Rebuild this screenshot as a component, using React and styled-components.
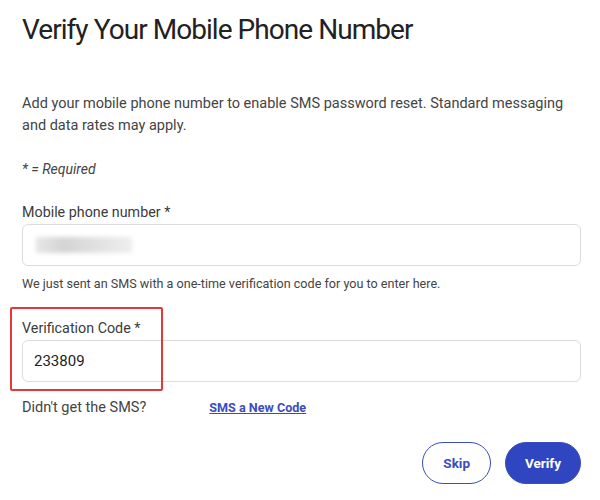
import React from "react";
import styled, { createGlobalStyle } from "styled-components";

const GlobalStyle = createGlobalStyle`
  body {
    margin: 0;
    background: #fff;
    font-family: Roboto, "Liberation Sans", Arial, sans-serif;
    color: #333;
  }
`;

/** Page wrapper */
const Page = styled.div`
  width: 559px;
  padding: 12px 0 0 22px;
`;

const Title = styled.h1`
  margin: 0;
  font-size: 28px;
  font-weight: 400;
  letter-spacing: -0.95px;
  color: #222;
  line-height: 36px;
`;

const Intro = styled.p`
  margin: 45px 0 0 0;
  font-size: 14.5px;
  line-height: 22px;
  color: #444;
`;

const Required = styled.p`
  margin: 21px 0 0 0;
  font-size: 14px;
  font-style: italic;
  color: #444;
  line-height: 22px;
`;

const Field = styled.div`
  position: relative;
  margin-top: ${(p) => p.$top || 0}px;
`;

const Label = styled.label`
  display: block;
  font-size: 14.3px;
  line-height: 20px;
  color: #3c3c3c;
  margin-bottom: 2px;
`;

const InputBox = styled.div`
  height: 40px;
  border: 1px solid #dcdcdc;
  border-radius: 6px;
  display: flex;
  align-items: center;
  padding: 0 11px;
  font-size: 15px;
  color: #222;
`;

const Blurred = styled.span`
  display: inline-block;
  width: 96px;
  height: 16px;
  margin-left: 2px;
  background: linear-gradient(90deg, #e6e6e6 0%, #d4d4d4 30%, #e0e0e0 60%, #eee 100%);
  filter: blur(2px);
`;

const Helper = styled.p`
  margin: 9px 0 0 0;
  font-size: 12.6px;
  line-height: 18px;
  color: #444;
`;

const Highlight = styled.div`
  position: absolute;
  left: -12px;
  top: -11px;
  width: 149px;
  height: 80px;
  border: 2px solid #e53935;
  border-radius: 2px;
  pointer-events: none;
`;

const ResendRow = styled.div`
  display: flex;
  align-items: center;
  margin-top: 17px;
  font-size: 14.5px;
  color: #444;
`;

const ResendLink = styled.a`
  margin-left: 63px;
  font-size: 12.6px;
  font-weight: 700;
  color: #3b4cc0;
  text-decoration: underline;
`;

const Actions = styled.div`
  display: flex;
  justify-content: flex-end;
  gap: 14px;
  margin-top: 26px;
`;

const Button = styled.button`
  height: 42px;
  padding: 0 ${(p) => (p.$primary ? 19 : 20)}px;
  border-radius: 21px;
  font-family: Roboto, "Liberation Sans", Arial, sans-serif;
  font-size: 13.5px;
  font-weight: 700;
  border: 1px solid #3b4cc0;
  background: ${(p) => (p.$primary ? "#2f46c0" : "#fff")};
  color: ${(p) => (p.$primary ? "#fff" : "#3b4cc0")};
  cursor: pointer;
`;

export default function App() {
  return (
    <>
      <GlobalStyle />
      <Page>
        <Title>Verify Your Mobile Phone Number</Title>
        <Intro>
          Add your mobile phone number to enable SMS password reset. Standard messaging
          and data rates may apply.
        </Intro>
        <Required>* = Required</Required>
        <Field $top={22}>
          <Label>Mobile phone number *</Label>
          <InputBox>
            <Blurred />
          </InputBox>
          <Helper>We just sent an SMS with a one-time verification code for you to enter here.</Helper>
        </Field>
        <Field $top={25}>
          <Label>Verification Code *</Label>
          <InputBox>233809</InputBox>
          <Highlight />
        </Field>
        <ResendRow>
          Didn't get the SMS?
          <ResendLink href="#">SMS a New Code</ResendLink>
        </ResendRow>
        <Actions>
          <Button>Skip</Button>
          <Button $primary>Verify</Button>
        </Actions>
      </Page>
    </>
  );
}
